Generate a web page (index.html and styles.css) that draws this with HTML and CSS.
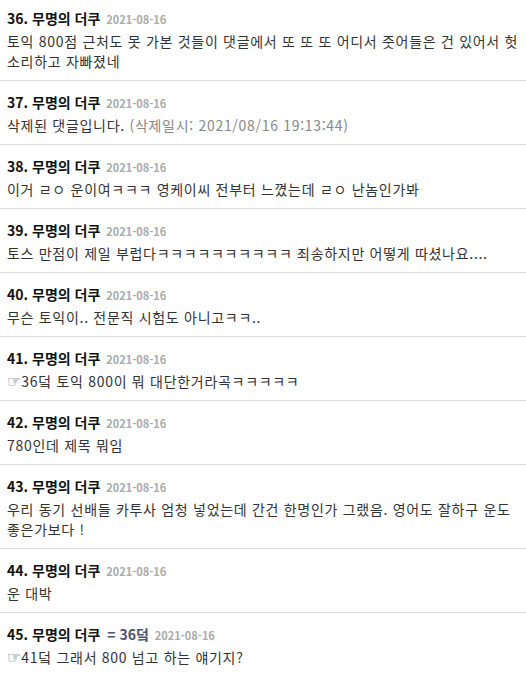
FILE: index.html
```html
<!DOCTYPE html>
<html lang="ko">
<head>
    <meta charset="UTF-8">
    <meta name="viewport" content="width=device-width, initial-scale=1.0">
    <title>댓글</title>
    <link rel="stylesheet" href="styles.css">
</head>
<body>

    <ul class="comment-list">
        <li class="comment">
            <div class="comment-head"><span class="num">36.</span> 무명의 더쿠 <span class="date">2021-08-16</span></div>
            <div class="comment-body">토익 800점 근처도 못 가본 것들이 댓글에서 또 또 또 어디서 줏어들은 건 있어서 헛소리하고 자빠졌네</div>
        </li>
        <li class="comment">
            <div class="comment-head"><span class="num">37.</span> 무명의 더쿠 <span class="date">2021-08-16</span></div>
            <div class="comment-body">삭제된 댓글입니다. <span class="deleted">(삭제일시: 2021/08/16 19:13:44)</span></div>
        </li>
        <li class="comment">
            <div class="comment-head"><span class="num">38.</span> 무명의 더쿠 <span class="date">2021-08-16</span></div>
            <div class="comment-body">이거 ㄹㅇ 운이여ㅋㅋㅋ 영케이씨 전부터 느꼈는데 ㄹㅇ 난놈인가봐</div>
        </li>
        <li class="comment">
            <div class="comment-head"><span class="num">39.</span> 무명의 더쿠 <span class="date">2021-08-16</span></div>
            <div class="comment-body">토스 만점이 제일 부럽다ㅋㅋㅋㅋㅋㅋㅋㅋㅋㅋ 죄송하지만 어떻게 따셨나요....</div>
        </li>
        <li class="comment">
            <div class="comment-head"><span class="num">40.</span> 무명의 더쿠 <span class="date">2021-08-16</span></div>
            <div class="comment-body">무슨 토익이.. 전문직 시험도 아니고ㅋㅋ..</div>
        </li>
        <li class="comment">
            <div class="comment-head"><span class="num">41.</span> 무명의 더쿠 <span class="date">2021-08-16</span></div>
            <div class="comment-body"><span class="ref">☞</span>36덬 토익 800이 뭐 대단한거라곡ㅋㅋㅋㅋㅋ</div>
        </li>
        <li class="comment">
            <div class="comment-head"><span class="num">42.</span> 무명의 더쿠 <span class="date">2021-08-16</span></div>
            <div class="comment-body">780인데 제목 뭐임</div>
        </li>
        <li class="comment">
            <div class="comment-head"><span class="num">43.</span> 무명의 더쿠 <span class="date">2021-08-16</span></div>
            <div class="comment-body">우리 동기 선배들 카투사 엄청 넣었는데 간건 한명인가 그랬음. 영어도 잘하구 운도 좋은가보다 !</div>
        </li>
        <li class="comment">
            <div class="comment-head"><span class="num">44.</span> 무명의 더쿠 <span class="date">2021-08-16</span></div>
            <div class="comment-body">운 대박</div>
        </li>
        <li class="comment">
            <div class="comment-head"><span class="num">45.</span> 무명의 더쿠 <span class="same">= 36덬</span> <span class="date">2021-08-16</span></div>
            <div class="comment-body"><span class="ref">☞</span>41덬 그래서 800 넘고 하는 얘기지?</div>
        </li>
    </ul>

</body>
</html>
```

FILE: styles.css
```css
body {
    font-family: "Noto Sans CJK KR", "Noto Sans", sans-serif;
    margin: 0;
    background-color: #ffffff;
    color: #333;
}
.comment-list {
    list-style: none;
    margin: 0;
    padding: 0;
}
.comment {
    padding: 11px 7px 9px;
    border-top: 1px solid #dcdcdc;
}
.comment:first-child {
    border-top: none;
    padding-top: 8px;
}
.comment-head {
    height: 20px;
    font-size: 14px;
    line-height: 20px;
    font-weight: bold;
    color: #111;
    margin-bottom: 3px;
}
.comment-head .same {
    color: #4b5571;
    margin-left: 3px;
}
.comment-head .date {
    font-size: 11px;
    line-height: 1;
    color: #aaa;
    margin-left: 2px;
}
.comment-body {
    font-size: 14px;
    line-height: 20px;
    letter-spacing: 0.7px;
    color: #333;
    word-break: break-all;
}
.deleted {
    color: #888;
}
.ref {
    font-family: "DejaVu Sans", sans-serif;
    font-size: 16px;
    line-height: 1;
    letter-spacing: 0;
    color: #3a4a6a;
}
```
